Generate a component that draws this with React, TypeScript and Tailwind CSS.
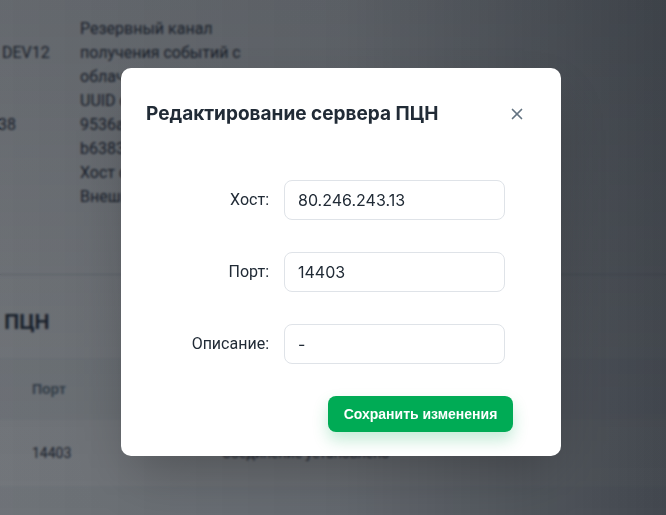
import { X } from 'lucide-react'

const fields = [
  { label: 'Хост:', value: '80.246.243.13' },
  { label: 'Порт:', value: '14403' },
  { label: 'Описание:', value: '-' },
]

const description = [
  'Резервный канал',
  'получения событий с',
  'облачного сервера',
  'UUID сервера:',
  '9536a1c2-7e4f-4d1b-',
  'b6383f0e21d9',
  'Хост сервера',
  'Внешний',
]

function BackgroundPage() {
  return (
    <div className="h-full w-full overflow-hidden bg-white font-['Roboto',sans-serif] text-[#1f2937]">
      <div className="flex pt-[17px] text-base leading-6">
        <div className="flex w-20 flex-col pl-0.5">
          <span className="mt-6">DEV12</span>
          <span className="-ml-1 mt-12">38</span>
        </div>
        <div className="flex flex-col">
          {description.map((line) => (
            <span key={line}>{line}</span>
          ))}
        </div>
      </div>
      <div className="mt-[65px] border-t border-[#cfd4da]" />
      <h2 className="-ml-[92px] mt-[33px] font-['Inter',sans-serif] text-xl font-bold">Серверы ПЦН</h2>
      <div className="mt-[22px] flex h-[62px] items-center bg-[#f4f6f8] pl-8 font-['Liberation_Sans',sans-serif] text-sm font-bold text-[#637381]">
        <span>Порт</span>
      </div>
      <div className="flex h-[66px] items-center pl-8 text-sm">
        <span className="w-[190px]">14403</span>
        <span>Соединение установлено</span>
      </div>
      <div className="h-10 bg-[#f4f6f8]" />
    </div>
  )
}

export default function App() {
  return (
    <div className="relative h-[515px] w-[666px] overflow-hidden">
      <BackgroundPage />
      <div className="absolute inset-0 bg-gradient-to-r from-[#161c24]/60 via-[#161c24]/65 to-[#161c24]/80 backdrop-blur-[1px]" />
      <div className="absolute inset-0 bg-gradient-to-b from-[#161c24]/15 to-transparent" />

      <div className="absolute left-[121px] top-[68px] w-[440px] rounded-[10px] bg-white pb-6 shadow-2xl">
        <div className="flex items-center justify-between pl-[25px] pr-[28px] pt-[30px]">
          <h3 className="font-['Inter',sans-serif] text-[19px] font-bold leading-7 text-[#212b36]">
            Редактирование сервера ПЦН
          </h3>
          <button className="flex h-8 w-8 items-center justify-center text-[#637381]">
            <X size={18} strokeWidth={2.25} />
          </button>
        </div>

        <div className="mt-[50px] flex flex-col gap-8 pl-[25px]">
          {fields.map((f) => (
            <div key={f.label} className="flex items-center gap-[15px]">
              <label className="w-[123px] text-right font-['Roboto',sans-serif] text-base text-[#212b36]">
                {f.label}
              </label>
              <div className="flex h-10 w-[221px] items-center rounded-lg border border-[#dfe3e8] px-[13px] font-['Inter',sans-serif] text-base text-[#212b36]">
                {f.value}
              </div>
            </div>
          ))}
        </div>

        <div className="mt-8 flex justify-end pr-12">
          <button className="h-9 w-[185px] rounded-lg bg-[#00ab55] font-['Liberation_Sans',sans-serif] text-sm font-bold text-white shadow-[0_8px_16px_0_rgba(0,171,85,0.24)]">
            Сохранить изменения
          </button>
        </div>
      </div>
    </div>
  )
}
